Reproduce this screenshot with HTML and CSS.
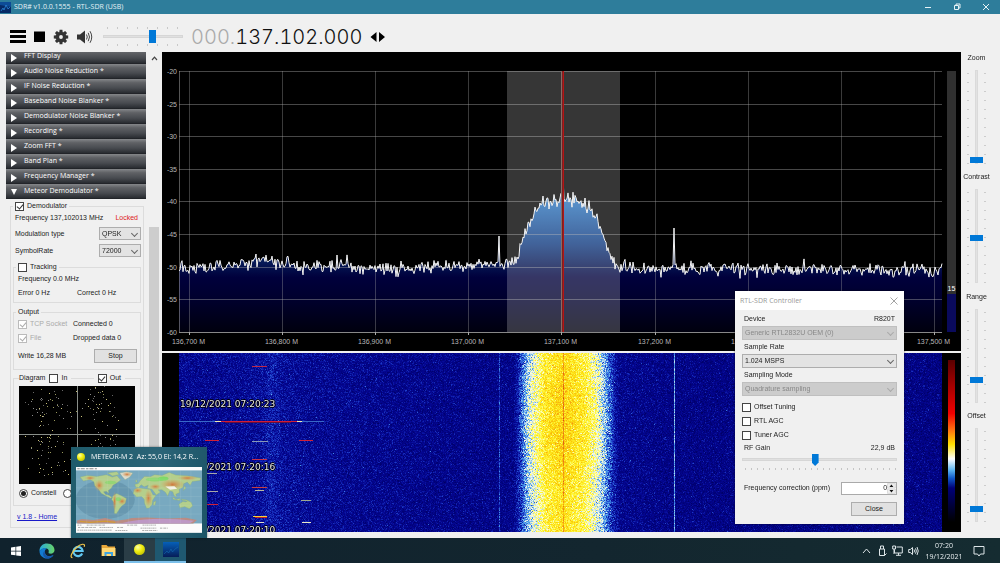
FILE: index.html
```html
<!DOCTYPE html>
<html lang="en">
<head>
<meta charset="utf-8">
<title>SDR# v1.0.0.1555 - RTL-SDR (USB)</title>
<link rel="stylesheet" href="styles.css">
</head>
<body>
<header class="titlebar">
  <svg class="app-icon" width="11" height="11" viewBox="0 0 11 11" aria-hidden="true"><rect width="11" height="11" fill="#062a66"/><path d="M0 0H11V5L0 3Z" fill="#0d4c97"/><path d="M1 9L3 6L4 8L6 3L8 7L10 5" stroke="#2b86d8" fill="none" stroke-width=".8"/></svg>
  <h1 class="title">SDR# v1.0.0.1555 - RTL-SDR (USB)</h1>
  <div class="window-buttons">
    <button type="button" aria-label="Minimize"><svg width="8" height="8" viewBox="0 0 8 8"><path d="M1 4.5H7" /></svg></button>
    <button type="button" aria-label="Restore"><svg width="8" height="8" viewBox="0 0 8 8"><path d="M1.5 2.5H5.5V6.5H1.5ZM3 2.5V1H7V5H5.5"/></svg></button>
    <button type="button" aria-label="Close window"><svg width="8" height="8" viewBox="0 0 8 8"><path d="M1 1L7 7M7 1L1 7"/></svg></button>
  </div>
</header>

<div class="app">
  <div class="toolbar">
    <button type="button" class="tool" aria-label="Menu"><svg width="16" height="14" viewBox="0 0 16 14"><path d="M0 0H16V3H0ZM0 5H16V8H0ZM0 10H16V13H0Z"/></svg></button>
    <button type="button" class="tool" aria-label="Stop receiver"><svg width="11" height="14" viewBox="0 0 11 14"><path d="M0 1.500H11V12H0Z"/></svg></button>
    <button type="button" class="tool gray" aria-label="Settings"><svg width="16" height="16" viewBox="-8 -8 16 16"><g><path id="tooth" d="M-1.700 -4.500L-1.400 -7.200H1.400L1.700 -4.500Z"/><use href="#tooth" transform="rotate(45)"/><use href="#tooth" transform="rotate(90)"/><use href="#tooth" transform="rotate(135)"/><use href="#tooth" transform="rotate(180)"/><use href="#tooth" transform="rotate(225)"/><use href="#tooth" transform="rotate(270)"/><use href="#tooth" transform="rotate(315)"/></g><circle r="3.600" fill="none" stroke="#333" stroke-width="3.400"/></svg></button>
    <button type="button" class="tool gray" aria-label="Mute"><svg width="16" height="14" viewBox="0 0 16 14"><path d="M0 4.500H3L8 .5V13.500L3 9.500H0Z"/><path d="M9.500 4.500Q11 7 9.500 9.500M11.200 2.800Q13.800 7 11.200 11.200M13 1.200Q16.500 7 13 12.800" fill="none" stroke="#444" stroke-width="1"/></svg></button>
    <span class="volume"><input type="range" class="hrange" aria-label="Volume" min="0" max="100" value="64"></span>
    <div class="frequency"><span class="dim">000.</span>137.102.000</div>
    <button type="button" class="tool arrows" aria-label="Tuning mode"><svg width="16" height="12" viewBox="0 0 16 12"><path d="M6.500 1V11L.5 6ZM9 1V11L15 6Z"/></svg></button>
  </div>

  <main class="workspace">
    <aside class="sidebar">
      <div class="panels">
        <div class="accordion">
          <button type="button" class="head">FFT Display</button>
          <button type="button" class="head">Audio Noise Reduction *</button>
          <button type="button" class="head">IF Noise Reduction *</button>
          <button type="button" class="head">Baseband Noise Blanker *</button>
          <button type="button" class="head">Demodulator Noise Blanker *</button>
          <button type="button" class="head">Recording *</button>
          <button type="button" class="head">Zoom FFT *</button>
          <button type="button" class="head">Band Plan *</button>
          <button type="button" class="head">Frequency Manager *</button>
          <button type="button" class="head open">Meteor Demodulator *</button>
        </div>
        <fieldset class="group demod">
          <legend><label class="check"><input type="checkbox" checked>Demodulator</label></legend>
          <div class="row"><span>Frequency 137,102013 MHz</span><span class="locked">Locked</span></div>
          <div class="row tall"><label for="mod">Modulation type</label><span class="combo small"><select id="mod"><option>QPSK</option></select></span></div>
          <div class="row tall"><label for="rate">SymbolRate</label><span class="combo small"><select id="rate"><option>72000</option></select></span></div>
          <fieldset class="group tracking">
            <legend><label class="check"><input type="checkbox">Tracking</label></legend>
            <div class="row">Frequency 0.0 MHz</div>
            <div class="row pair"><span>Error 0 Hz</span><span>Correct 0 Hz</span></div>
          </fieldset>
          <fieldset class="group output">
            <legend>Output</legend>
            <div class="row pair"><label class="check off"><input type="checkbox" checked disabled>TCP Socket</label><span>Connected 0</span></div>
            <div class="row pair"><label class="check off"><input type="checkbox" checked disabled>File</label><span>Dropped data 0</span></div>
            <div class="row write"><span>Write 16,28 MB</span><button type="button" class="push">Stop</button></div>
          </fieldset>
          <fieldset class="group diagram">
            <legend><span>Diagram</span><label class="check"><input type="checkbox">In</label><i class="rule"></i><label class="check"><input type="checkbox" checked>Out</label><i class="rule end"></i></legend>
            <canvas id="constellation" width="116" height="98"></canvas>
            <div class="row radios"><label class="check"><input type="radio" name="view" checked>Constell</label><input type="radio" name="view" aria-label="Eye view"></div>
          </fieldset>
          <a class="home" href="#">v 1.8 - Home</a>
        </fieldset>
      </div>
      <div class="scrollbar"><svg width="7" height="5" viewBox="0 0 7 5" aria-hidden="true"><path d="M1 4L3.500 1.200L6 4" fill="none" stroke="#444" stroke-width="1.200"/></svg><div class="scroll-thumb"></div></div>
    </aside>

    <section class="displays">
      <div class="spectrum">
        <svg id="spectrum" viewBox="0 0 799 299" role="img" aria-label="Spectrum">
          <defs>
            <linearGradient id="fill" gradientUnits="userSpaceOnUse" x1="0" y1="19" x2="0" y2="280">
              <stop offset="0" stop-color="#87ceff"/><stop offset=".45" stop-color="#3482cc"/><stop offset=".52" stop-color="#286cb4"/><stop offset=".66" stop-color="#0f3a80"/><stop offset=".75" stop-color="#04124e"/><stop offset=".79" stop-color="#00003c"/><stop offset=".88" stop-color="#00002c"/><stop offset="1" stop-color="#00000e"/>
            </linearGradient>
          </defs>
          <path id="area" fill="url(#fill)"/>
          <g id="grid"></g>
          <rect x="345" y="19" width="113" height="261" fill="#fff" fill-opacity=".21"/>
          <path id="trace" fill="none" stroke="#f4f4f4" stroke-width="1" stroke-linejoin="round"/>
          <path d="M399.500 19V280" stroke="#8a6a66"/>
          <path d="M401.500 19V280" stroke="#b41414"/>
          <path d="M400.500 19V280" stroke="#7a2020"/>
          <rect x="785" y="19" width="9" height="261" fill="#303030"/>
          <rect x="785" y="242" width="9" height="38" fill="#0a0a5c"/>
          <text class="meter" x="789.500" y="239" text-anchor="middle">15</text>
        </svg>
      </div>
      <div class="waterfall">
        <div class="fall">
          <canvas id="fall" width="763" height="179"></canvas>
          <div class="stamps"><span>19/12/2021 07:20:23</span><span>19/12/2021 07:20:16</span><span>19/12/2021 07:20:10</span></div>
        </div>
        <div class="palette"></div>
      </div>
    </section>

    <aside class="sliders">
      <label class="vgroup">Zoom<span class="ticks"><input type="range" class="vrange" min="0" max="100" value="0"></span></label>
      <label class="vgroup">Contrast<span class="ticks"><input type="range" class="vrange" min="0" max="100" value="48"></span></label>
      <label class="vgroup">Range<span class="ticks"><input type="range" class="vrange" min="0" max="100" value="22"></span></label>
      <label class="vgroup">Offset<span class="ticks"><input type="range" class="vrange" min="0" max="100" value="10"></span></label>
    </aside>
  </main>
</div>

<section class="dialog" role="dialog" aria-labelledby="dlg-title">
  <div class="dialog-bar"><h2 id="dlg-title">RTL-SDR Controller</h2><button type="button" aria-label="Close dialog"><svg width="8" height="8" viewBox="0 0 8 8"><path d="M.5 .5L7.500 7.500M7.500 .5L.5 7.500" stroke="#999" stroke-width=".9"/></svg></button></div>
  <div class="dialog-body">
    <div class="line"><label for="device">Device</label><span>R820T</span></div>
    <span class="combo off"><select id="device" disabled><option>Generic RTL2832U OEM (0)</option></select></span>
    <div class="line"><label for="sample">Sample Rate</label></div>
    <span class="combo"><select id="sample"><option>1.024 MSPS</option></select></span>
    <div class="line"><label for="mode">Sampling Mode</label></div>
    <span class="combo off"><select id="mode" disabled><option>Quadrature sampling</option></select></span>
    <div class="checks">
      <label class="check"><input type="checkbox">Offset Tuning</label>
      <label class="check"><input type="checkbox">RTL AGC</label>
      <label class="check"><input type="checkbox">Tuner AGC</label>
    </div>
    <div class="line gain"><label for="gain">RF Gain</label><span>22,9 dB</span></div>
    <span class="gain-slider"><input type="range" class="hrange" id="gain" min="0" max="100" value="47"></span>
    <div class="line ppm"><label for="ppm">Frequency correction (ppm)</label>
      <span class="spin"><input type="number" id="ppm" value="0"><svg width="9" height="11" viewBox="0 0 9 11" aria-hidden="true"><path d="M.5 .5H8.500V5H.5ZM.5 6H8.500V10.500H.5Z" fill="#eee" stroke="#ccc" stroke-width=".6"/><path d="M2.500 4L4.500 1.500L6.500 4ZM2.500 7L4.500 9.500L6.500 7Z" fill="#111"/></svg></span>
    </div>
    <button type="button" class="push close">Close</button>
  </div>
</section>

<div class="preview">
  <div class="preview-title"><i class="ball small-ball"></i><span>METEOR-M 2&nbsp; Az: 55,0 El: 14,2 R...</span></div>
  <svg viewBox="228 308 375 196" role="img" aria-label="World map">
    <defs>
      <radialGradient id="brown"><stop offset="0" stop-color="#d07a40"/><stop offset="1" stop-color="#d9a860" stop-opacity="0"/></radialGradient>
    </defs>
    <rect x="228" y="308" width="375" height="196" fill="#fcfcfc"/>
    <path d="M232 313H290" stroke="#888" stroke-width="3" stroke-dasharray="7 3 12 4"/>
    <rect x="228" y="318" width="375" height="158" fill="#78a9c0"/>
    <ellipse cx="315" cy="405" rx="88" ry="58" fill="#6898b0"/>
    <g fill="#b4cf8c" stroke="#86ab7c" stroke-width="1">
      <path d="M240 338L262 333L290 336L318 331L336 338L350 334L361 347L350 355L338 362L333 371L324 378L326 386L318 380L310 382L316 390L326 392L335 399L331 401L315 393L303 386L294 373L284 364L281 352L270 345L250 350Z"/>
      <path d="M322 326L350 322L356 330L337 335Z"/>
      <path d="M358 326L378 322L397 326L388 338L374 346L367 338Z" fill="#dcdccf"/>
      <path d="M338 394L349 387L362 393L378 402L374 417L365 423L359 430L354 438L348 447L342 446L343 428L344 417L334 405Z"/>
      <path d="M406 368L403 360L414 357L419 349L432 336L449 337L462 331L484 333L505 324L525 332L558 334L600 341L597 348L574 351L568 362L559 353L548 358L546 369L535 374L536 384L525 389L527 398L520 393L516 382L507 379L501 394L494 383L484 376L473 376L479 383L467 391L454 374L440 371L443 362L431 367L422 361L414 369Z"/>
      <path d="M402 375L412 370L429 372L449 375L457 391L466 392L456 407L454 420L446 430L438 431L432 416L431 404L423 396L408 397L398 386Z"/>
      <path d="M459 412L466 409L463 422L458 421Z"/>
      <path d="M534 419L546 411L556 412L560 407L571 414L575 424L565 432L552 426L537 429Z"/>
      <path d="M516 397L526 405L538 402L536 408L517 404ZM541 404L558 406L562 410L545 407ZM551 364L555 371L547 378ZM404 350L409 346L410 354Z"/>
    </g>
    <g fill="url(#brown)">
      <ellipse cx="297" cy="363" rx="15" ry="18"/><ellipse cx="270" cy="341" rx="17" ry="7"/><ellipse cx="343" cy="410" rx="6" ry="30"/><ellipse cx="365" cy="410" rx="13" ry="11"/><ellipse cx="412" cy="378" rx="15" ry="9"/><ellipse cx="444" cy="401" rx="12" ry="28"/><ellipse cx="464" cy="367" rx="18" ry="9"/><ellipse cx="515" cy="360" rx="38" ry="17"/><ellipse cx="560" cy="341" rx="31" ry="8"/><ellipse cx="380" cy="330" rx="16" ry="8"/>
    </g>
    <path d="M494 366L521 365L529 373L508 376Z" fill="#f6f4e8"/>
    <g fill="#7ed966"><ellipse cx="463" cy="345" rx="28" ry="6" opacity=".7"/><ellipse cx="488" cy="342" rx="15" ry="6"/><ellipse cx="331" cy="354" rx="17" ry="5" opacity=".6"/><ellipse cx="354" cy="404" rx="8" ry="6" opacity=".7"/></g>
    <path d="M245 463L280 466L315 460L347 468L376 464L394 460L440 458L500 461L555 459L588 466L577 476H232L230 468Z" fill="#ba8c83"/>
    <path d="M385 470Q470 455 580 468L565 476H360Z" fill="#bd98c4"/>
    <path d="M240 470L270 473L315 469L345 473" stroke="#d19a36" fill="none" stroke-width="4"/>
    <g stroke="#c7dfdc" stroke-width=".6" opacity=".6"><path d="M260 318V476M291 318V476M322 318V476M353 318V476M384 318V476M415 318V476M446 318V476M477 318V476M508 318V476M539 318V476M570 318V476M228 344H603M228 370H603M228 396H603M228 422H603M228 448H603"/></g>
    <path d="M232 481H245M260 481H315M380 481H410M426 481H466M234 488H287M298 488H338M350 488H370M420 490H468M478 490H502M232 496H335M345 497H382M425 497H470" stroke="#888" stroke-width="2" stroke-dasharray="6 2 3 1"/>
  </svg>
</div>

<footer class="taskbar">
  <nav class="tasks">
    <button type="button" class="task" aria-label="Start"><svg width="10" height="10" viewBox="0 0 10 10"><path d="M0 1.400L4.500 .8V4.700H0ZM5.200 .7L10 0V4.700H5.200ZM0 5.400H4.500V9.300L0 8.700ZM5.200 5.400H10V10L5.200 9.400Z" fill="#fff"/></svg></button>
    <button type="button" class="task" aria-label="Edge"><svg width="16" height="16" viewBox="0 0 16 16"><defs><linearGradient id="ed" x2="1"><stop stop-color="#28a9df"/><stop offset="1" stop-color="#68d467"/></linearGradient></defs><path d="M0.500 8C.5 3 4 .5 8 .5C13 .5 15.700 4 15.500 7.500C15.300 10 13 11 10.500 10.500C9 10.200 9.700 9.500 9.800 8C9.800 5 5 3.500.5 8Z" fill="url(#ed)"/><path d="M.5 8C3 4 7 4.500 8 6C6 6 5.500 8 6 10C7 13.500 11 14 14.500 12C12.500 15.500 9 16 6.500 15.400C2.500 14.500.5 11.500.5 8Z" fill="#137bd0"/><path d="M5.800 8C5 14.500 11.500 14 14.500 12C12 16.200 7 16.400 4.800 13.500C3.500 11.500 4 9 5.800 8Z" fill="#1756a7"/></svg></button>
    <button type="button" class="task" aria-label="Internet Explorer"><svg width="16" height="16" viewBox="0 0 16 16"><path d="M12.200 10.500A4.600 4.600 0 1 1 12.600 8H4" fill="none" stroke="#61c8f2" stroke-width="2.200"/><path d="M2.500 14.500C-.8 15 2 8.500 6.500 4.500C10.500 .8 15.800-.2 14.200 3.800" fill="none" stroke="#f0c64b" stroke-width="1.200"/></svg></button>
    <button type="button" class="task" aria-label="File Explorer"><svg width="15" height="13" viewBox="0 0 15 13"><path d="M.5 1H5.500L7 2.500H14V12H.5Z" fill="#e8a83b"/><path d="M1 4H14.500V12H1Z" fill="#ffd874"/><path d="M3.500 12V8H12V12H10V10H5.500V12Z" fill="#3fa4df"/></svg></button>
    <button type="button" class="task active" aria-label="Orbitron"><i class="ball"></i></button>
    <button type="button" class="task active current" aria-label="SDR#"><svg width="16" height="15" viewBox="0 0 16 15"><defs><linearGradient id="sd" x2="0" y2="1"><stop stop-color="#0660b8"/><stop offset="1" stop-color="#061d59"/></linearGradient></defs><rect width="16" height="15" fill="url(#sd)"/><path d="M1 12L4 9L5.500 11L8 7L9.500 10L12 7L15 5" fill="none" stroke="#1775b8" stroke-width=".5"/></svg></button>
  </nav>
  <div class="tray">
    <svg width="9" height="8" viewBox="0 0 9 8"><path d="M1 6L4.500 2L8 6"/></svg>
    <svg width="9" height="12" viewBox="0 0 9 12"><path d="M2.500 4V1H5.500V4M1.500 4H6.500V10.500H1.500ZM6.500 10.500L8.500 8.500"/></svg>
    <svg width="11" height="11" viewBox="0 0 11 11"><path d="M2.500 4.500V8H10.300V2H4.500M6.500 8V10.300M4 10.300H9M.7 1H3.500V4H.7ZM2 4V9"/></svg>
    <svg width="11" height="10" viewBox="0 0 11 10"><path d="M.7 3.500H2.300L4.500 1.500V8.500L2.300 6.500H.7ZM6 3.500Q7 5 6 6.500M7.500 2.300Q9.200 5 7.500 7.700M9 1Q11.500 5 9 9"/></svg>
    <time class="clock"><span>07:20</span><span>19/12/2021</span></time>
    <svg width="12" height="12" viewBox="0 0 12 12"><path d="M1 1.500H11V9H7.500L6 11L4.500 9H1Z"/></svg>
  </div>
</footer>
<script src="script.js"></script>
</body>
</html>
```
FILE: styles.css
```css
* { box-sizing: border-box; }
body {
  margin: 0;
  height: 100vh;
  display: flex;
  flex-direction: column;
  position: relative;
  overflow: hidden;
  background: #f0f0f0;
  color: #222;
  font: 7px/10px "Liberation Sans", Arial, sans-serif;
}
button, input, select { font: inherit; color: inherit; margin: 0; }
button { border: 0; padding: 0; background: none; }
svg, canvas { display: block; }
input[type="checkbox"], input[type="radio"] {
  appearance: none;
  width: 9px;
  height: 9px;
  flex: none;
  border: 1px solid #444;
  background: #fff;
  display: grid;
  place-items: center;
}
input[type="checkbox"]:checked::after {
  content: "";
  width: 3px;
  height: 5px;
  margin-bottom: 2px;
  border: solid #333;
  border-width: 0 1px 1px 0;
  transform: rotate(40deg);
}
input[type="checkbox"]:disabled { border-color: #bbb; }
input[type="checkbox"]:disabled::after { border-color: #aaa; }
input[type="radio"] { border-radius: 50%; }
input[type="radio"]:checked::after { content: ""; width: 5px; height: 5px; border-radius: 50%; background: #222; }

/* Title bar */
.titlebar {
  flex: none;
  height: 14px;
  display: flex;
  align-items: center;
  gap: 3px;
  background: #2e7d9b;
  color: #e6f2f6;
}
.title { margin: 0; flex: 1; font: 7px/14px "Open Sans", "Noto Sans", sans-serif; }
.window-buttons { display: flex; }
.window-buttons button { width: 29px; height: 14px; display: grid; place-items: center; }
.window-buttons svg { fill: none; stroke: #e6f2f6; stroke-width: 1; }

/* Toolbar */
.app { flex: 1; min-height: 0; display: flex; flex-direction: column; padding-bottom: 6px; }
.toolbar { flex: none; height: 38px; display: flex; align-items: center; padding: 7px 10px 0; gap: 8px; }
.tool { fill: #000; }
.tool.gray { fill: #333; }
.volume {
  width: 80px;
  height: 19px;
  margin-left: 2px;
  display: flex;
  align-items: center;
  background:
    repeating-linear-gradient(90deg, #c8c8c8 0 1px, transparent 1px 10px) 4px 0 / 74px 2px no-repeat,
    repeating-linear-gradient(90deg, #c8c8c8 0 1px, transparent 1px 10px) 4px 100% / 74px 2px no-repeat;
}
.frequency {
  font: 300 20px/24px Inter, "Open Sans", sans-serif;
  font-variant-numeric: tabular-nums;
  color: #111;
}
.frequency .dim { color: #aaa; }

.hrange { appearance: none; width: 100%; height: 13px; margin: 0; background: none; }
.hrange::-webkit-slider-runnable-track { height: 3px; background: #e0e0e0; border: 1px solid #d6d6d6; }
.hrange::-webkit-slider-thumb { appearance: none; width: 7px; height: 13px; margin-top: -6px; background: #0078d7; }

/* Workspace */
.workspace { flex: 1; min-height: 0; display: flex; }
.sidebar { flex: none; width: 162px; display: flex; gap: 3px; padding-left: 6px; }
.panels { width: 140px; overflow: hidden; }
.accordion { margin-top: -3px; }
.head {
  display: block;
  position: relative;
  width: 100%;
  height: 15px;
  padding: 0 0 2px 18px;
  text-align: left;
  color: #fff;
  font: 500 7px/13px "Open Sans", "Noto Sans", sans-serif;
  background: linear-gradient(#85878a, #5f6165 25%, #484b50 60%, #2a2d32 92%, #1c1e22);
}
.head::before {
  content: "";
  position: absolute;
  left: 5px;
  top: 5px;
  border: solid transparent;
  border-width: 4px 0 4px 6px;
  border-left-color: #fff;
}
.head.open::before { border-width: 6px 3px 0; border-top-color: #fff; border-left-color: transparent; }

.group { min-width: 0; margin: 0; padding: 0; border: 1px solid #dcdcdc; }
.group legend { height: 10px; margin-left: 2px; padding: 0 2px; }
.check { display: flex; align-items: center; gap: 3px; }
.check.off { color: #aaa; }
.row { height: 14px; display: flex; align-items: center; justify-content: space-between; }
.row.tall { height: 17px; }
.demod { margin: 2px 2px 0 4px; padding: 0 2px 5px; }
.demod > legend { margin-left: 0; }
.demod > .row { padding-left: 2px; }
.locked { color: #d22; padding-right: 3px; }
.combo { position: relative; display: block; }
.combo select {
  display: block;
  appearance: none;
  width: 100%;
  height: 14px;
  padding: 0 2px;
  border: 1px solid #adadad;
  border-radius: 0;
  background: #e3e3e3;
}
.combo.small { width: 42px; }
.combo.small select { height: 13px; }
.combo::after {
  content: "";
  position: absolute;
  right: 4px;
  top: 4px;
  width: 4px;
  height: 4px;
  border: solid #666;
  border-width: 0 1px 1px 0;
  transform: rotate(45deg);
}
.combo.off select { background: #ccc; color: #888; border-color: #bfbfbf; opacity: 1; }
.combo.off::after { border-color: #aaa; }
.tracking { margin-top: 3px; padding-bottom: 2px; }
.tracking .row, .output .row { padding-left: 4px; }
.pair { display: grid; grid-template-columns: 1fr 1fr; }
.tracking .pair { grid-template-columns: 59px 1fr; }
.output .pair { grid-template-columns: 55px 1fr; }
.output { margin-top: 4px; padding-bottom: 6px; }
.output .row { padding-right: 3px; }
.output .write { height: 15px; margin-top: 3px; }
.push { width: 43px; height: 14px; border: 1px solid #adadad; background: #e1e1e1; text-align: center; }
.diagram { margin-top: 3px; padding: 3px 5px 3px; }
.diagram legend { display: flex; align-items: center; width: 100%; gap: 4px; padding: 0; margin: 0; }
.rule { flex: 1; height: 1px; background: #dcdcdc; }
.rule.end { flex: 0 0 10px; }
#constellation { width: 100%; height: 98px; background: #000; }
.row.radios { height: 18px; justify-content: flex-start; gap: 7px; }
.home { display: inline-block; margin: 6px 0 0 4px; color: #1a1ac8; }
.scrollbar { width: 10px; padding-top: 4px; display: flex; flex-direction: column; align-items: center; }
.scroll-thumb { width: 10px; flex: 1; margin-top: 166px; background: #cdcdcd; }

/* Spectrum and waterfall */
.displays { flex: 1; min-width: 0; display: flex; flex-direction: column; gap: 2px; }
.spectrum { flex: 299 1 0; min-height: 0; background: #000; }
.spectrum svg { width: 100%; height: 100%; }
.spectrum text { font: 7px "Liberation Sans", Arial, sans-serif; fill: #b8b8b8; }
.spectrum .meter { fill: #fff; }
.waterfall { flex: 179 1 0; min-height: 0; display: flex; gap: 6px; padding: 0 6px 0 17px; background: #000; }
.fall { flex: 1; min-width: 0; position: relative; overflow: hidden; }
.fall canvas { width: 100%; height: 100%; }
.stamps { position: absolute; inset: 20px auto auto 1px; display: flex; flex-direction: column; }
.stamps span {
  font: 9px/63px "DejaVu Sans", Verdana, sans-serif;
  color: #e4e4e4;
  text-shadow: 1px 0 #000, -1px 0 #000, 0 1px #000, 0 -1px #000;
}
.palette {
  width: 7px;
  margin: 7px 0 10px;
  background: linear-gradient(#5a0000, #a00000 15%, #f00000 33%, #ff7010 43%, #ffe000 52%, #fff 61%, #5ab4f0 68%, #1058c8 73%, #000078 79%, #00001e 95%, #000);
}

/* Right-hand sliders */
.sliders { flex: none; width: 39px; display: flex; flex-direction: column; padding: 0 8px 3px 0; }
.vgroup { flex: 1; display: flex; flex-direction: column; align-items: center; padding-top: 1px; gap: 7px; }
.ticks {
  width: 19px;
  height: 94px;
  display: flex;
  justify-content: center;
  background:
    repeating-linear-gradient(#ccc 0 1px, transparent 1px 9px) 0 3px / 2px 91px no-repeat,
    repeating-linear-gradient(#ccc 0 1px, transparent 1px 9px) 100% 3px / 2px 91px no-repeat;
}
.vrange { appearance: none; writing-mode: vertical-lr; direction: rtl; width: 13px; height: 94px; background: none; }
.vrange::-webkit-slider-runnable-track { width: 3px; height: 100%; background: #e2e2e2; border: 1px solid #dadada; }
.vrange::-webkit-slider-thumb { appearance: none; width: 13px; height: 6px; margin-left: -6px; background: #0078d7; }

/* RTL-SDR dialog */
.dialog {
  position: absolute;
  top: 291px;
  right: 96px;
  width: 169px;
  background: #f0f0f0;
  box-shadow: 0 0 2px rgba(0, 0, 0, .6);
}
.dialog-bar { height: 19px; padding: 0 6px 0 5px; display: flex; align-items: center; justify-content: space-between; background: #fff; color: #999; }
.dialog-bar h2 { margin: 0; font: 7px/18px "Open Sans", "Noto Sans", sans-serif; }
.dialog-body { padding: 2px 7px 8px; display: flex; flex-direction: column; }
.line { height: 14px; padding: 0 2px; display: flex; align-items: center; justify-content: space-between; }
.checks { margin-top: 4px; }
.checks .check { height: 14px; }
.line.gain { height: 12px; }
.gain-slider {
  height: 16px;
  background: repeating-linear-gradient(90deg, #c4c4c4 0 1px, transparent 1px 6px) 3px 100% / 151px 2px no-repeat;
}
.gain-slider .hrange { display: block; height: 11px; }
.gain-slider .hrange::-webkit-slider-thumb { height: 12px; margin-top: -5px; clip-path: polygon(0 0, 100% 0, 100% 70%, 50% 100%, 0 70%); }
.line.ppm { margin: 11px 0 7px; padding-right: 0; }
.spin { width: 56px; height: 13px; display: flex; align-items: center; background: #fff; border: 1px solid #aaa; }
.spin input { width: 46px; min-width: 0; padding: 0; border: 0; background: none; text-align: right; appearance: textfield; }
.spin input::-webkit-inner-spin-button { appearance: none; }
.close { width: 46px; align-self: flex-end; }

/* Task preview */
.preview {
  position: absolute;
  left: 71px;
  bottom: 25px;
  width: 136px;
  padding: 0 5px 5px;
  background: linear-gradient(100deg, #1f5b6b, #2b6477 60%, #1c5467);
  box-shadow: 0 0 2px rgba(0, 0, 0, .5);
}
.preview-title { height: 20px; display: flex; align-items: center; gap: 6px; padding-left: 1px; color: #fff; font: 7px/20px "Open Sans", "Noto Sans", sans-serif; white-space: nowrap; }
.preview svg { width: 100%; height: auto; }
.ball { flex: none; width: 11px; height: 11px; border-radius: 50%; background: radial-gradient(circle at 35% 30%, #ffffa8, #f0ee10 40%, #b4b400 90%); }
.small-ball { width: 8px; height: 8px; }

/* Taskbar */
.taskbar { flex: none; height: 25px; display: flex; justify-content: space-between; background: linear-gradient(90deg, #10222d, #13262f 60%, #152c31); color: #e8eef0; }
.tasks { display: flex; }
.task { width: 31px; height: 25px; display: grid; place-items: center; }
.task.active { background: #2a3d46; border-bottom: 2px solid #7cc0ea; }
.task.current { background: #1f5870; }
.tray { display: flex; align-items: center; gap: 5px; padding-right: 15px; }
.tray svg { fill: none; stroke: #dde5e8; stroke-width: 1; }
.tray svg:first-child { margin-right: 2px; }
.clock { margin: 0 5px 0 1px; width: 38px; display: flex; flex-direction: column; align-items: center; font: 7px/11px "Open Sans", "Noto Sans", sans-serif; }
```
FILE: script.js
```js
// Repeatable pseudo-random source, so that the noise is the same on each load.
let seed = 20211219;
function rnd() {
  seed = (seed * 1664525 + 1013904223) >>> 0;
  return seed / 4294967296;
}
function gauss() {
  return (rnd() + rnd() + rnd() + rnd() - 2) * 1.7;
}
function lerpTable(table, x) {
  if (x <= table[0][0]) return table[0][1];
  for (let i = 1; i < table.length; i++) {
    if (x <= table[i][0]) {
      const [x0, y0] = table[i - 1], [x1, y1] = table[i];
      return y0 + (y1 - y0) * (x - x0) / (x1 - x0);
    }
  }
  return table[table.length - 1][1];
}

// Spectrum grid and labels
let grid = '';
for (let i = 0; i < 9; i++) {
  const y = 19.5 + Math.round(i * 32.6);
  grid += `<path d="M17 ${y}H780" stroke="#aaa" stroke-opacity="${i === 8 ? .8 : .42}"/>`;
  grid += `<text x="15" y="${y + 2.5}" text-anchor="end">${-20 - i * 5}</text>`;
}
grid += '<path d="M17.500 19V280" stroke="#aaa" stroke-opacity=".5"/>';
for (let i = 0; i < 9; i++) {
  const x = 27.5 + Math.round(i * 93.1);
  const f = 136700 + i * 100;
  grid += `<path d="M${x} 19V280" stroke="#aaa" stroke-opacity=".34"/><path d="M${x} 280V283" stroke="#aaa"/>`;
  grid += `<text x="${x - 1}" y="292" text-anchor="middle">${Math.floor(f / 1000)},${String(f % 1000).padStart(3, '0')} M</text>`;
}
document.getElementById('grid').innerHTML = grid;

// Signal trace
const level = [[17, 217], [28, 217], [53, 214], [88, 211], [92, 206], [108, 209], [128, 214], [168, 214], [208, 216],
  [288, 216], [318, 213], [340, 213], [349, 213], [356, 204], [362, 183], [368, 170], [374, 158], [383, 150], [390, 147],
  [413, 147], [420, 150], [428, 157], [436, 170], [442, 186], [448, 202], [453, 214], [478, 217], [780, 218]];
const spikes = { 94: 202, 175: 203, 337: 184, 401: 125, 512: 176 };
const points = [];
for (let x = 17; x <= 780; x += 1) {
  let y = lerpTable(level, x) + gauss() * 3.6;
  if (rnd() > .97) y -= 4;
  if (spikes[x]) y = spikes[x];
  points.push(`${x} ${y.toFixed(1)}`);
}
document.getElementById('trace').setAttribute('d', 'M' + points.join('L'));
document.getElementById('area').setAttribute('d', 'M17 280L' + points.join('L') + 'L780 280Z');

// Waterfall
const palette = [[0, [0, 0, 60]], [.12, [0, 0, 112]], [.2, [4, 6, 146]], [.27, [28, 58, 200]], [.34, [76, 160, 236]],
  [.42, [246, 250, 236]], [.5, [255, 248, 60]], [.58, [252, 214, 10]], [.68, [244, 150, 20]], [.8, [210, 60, 20]], [1, [130, 0, 20]]];
function colour(t) {
  t = Math.max(0, Math.min(1, t));
  for (let i = 1; i < palette.length; i++) {
    if (t <= palette[i][0]) {
      const [t0, a] = palette[i - 1], [t1, b] = palette[i];
      const k = (t - t0) / (t1 - t0);
      return a.map((v, c) => v + (b[c] - v) * k);
    }
  }
  return palette[palette.length - 1][1];
}
const power = [[0, .19], [60, .195], [80, .205], [92, .23], [104, .205], [130, .195], [250, .18], [312, .175], [334, .18], [341, .26], [345, .33], [349, .385],
  [356, .44], [366, .52], [384, .565], [402, .52], [414, .46], [422, .39], [427, .33], [433, .25], [440, .185], [500, .17], [763, .165]];
const fall = document.getElementById('fall');
const ctx = fall.getContext('2d');
const img = ctx.createImageData(fall.width, fall.height);
for (let y = 0; y < fall.height; y++) {
  const heat = .035 * Math.sin(Math.PI * Math.min(1, (y + 10) / 150));
  for (let x = 0; x < fall.width; x++) {
    let t = lerpTable(power, x);
    const inside = x > 339 && x < 434;
    t += gauss() * (inside ? .045 : .032);
    if (inside) t += heat - .015;
    if (!inside && rnd() > .985) t += .05;
    if (x === 384) t += .11;
    if (x === 495) t = .3 + rnd() * .1;
    if (x === 320) t = .2 + rnd() * .14;
    const c = colour(t), o = (y * fall.width + x) * 4;
    img.data[o] = c[0]; img.data[o + 1] = c[1]; img.data[o + 2] = c[2]; img.data[o + 3] = 255;
  }
}
ctx.putImageData(img, 0, 0);
// Short bursts: x, y, width, colour
[[73, 13, 15, '#c02848'], [0, 68, 36, '#3868c8'], [36, 68, 87, '#f0e8b0'], [42, 68, 76, '#d01c38'], [46, 69, 66, '#601040'], [123, 68, 22, '#3868c8'],
  [26, 87, 14, '#d02038'], [73, 88, 16, '#8898b8'], [120, 87, 14, '#d02038'], [73, 106, 15, '#c83048'], [26, 120, 12, '#a8a8a8'],
  [26, 138, 13, '#a8a8a8'], [73, 134, 15, '#c84040'], [76, 137, 9, '#b8b8a0'], [122, 147, 10, '#a0a890'], [26, 151, 13, '#d02038'],
  [74, 163, 14, '#f0d040'], [76, 164, 12, '#c02020'], [77, 169, 8, '#e0e0c8'], [123, 169, 9, '#e8e8c8']
].forEach(([x, y, w, c]) => { ctx.fillStyle = c; ctx.fillRect(x, y, w, 1); });

// Constellation
const con = document.getElementById('constellation').getContext('2d');
con.fillStyle = '#8a8f8a';
con.fillRect(58, 0, 1, 98);
con.fillRect(0, 48, 116, 1);
[[30, 24, 13, 12, 60], [80, 20, 10, 12, 50], [29, 68, 11, 12, 50], [88, 68, 12, 12, 36]].forEach(([cx, cy, sx, sy, n]) => {
  for (let i = 0; i < n; i++) {
    con.fillStyle = ['#98985c', '#8c8c8c', '#c8c078', '#666'][Math.floor(rnd() * 4)];
    con.fillRect(Math.round(cx + gauss() * sx), Math.round(cy + gauss() * sy), 1, 1);
  }
});
```
